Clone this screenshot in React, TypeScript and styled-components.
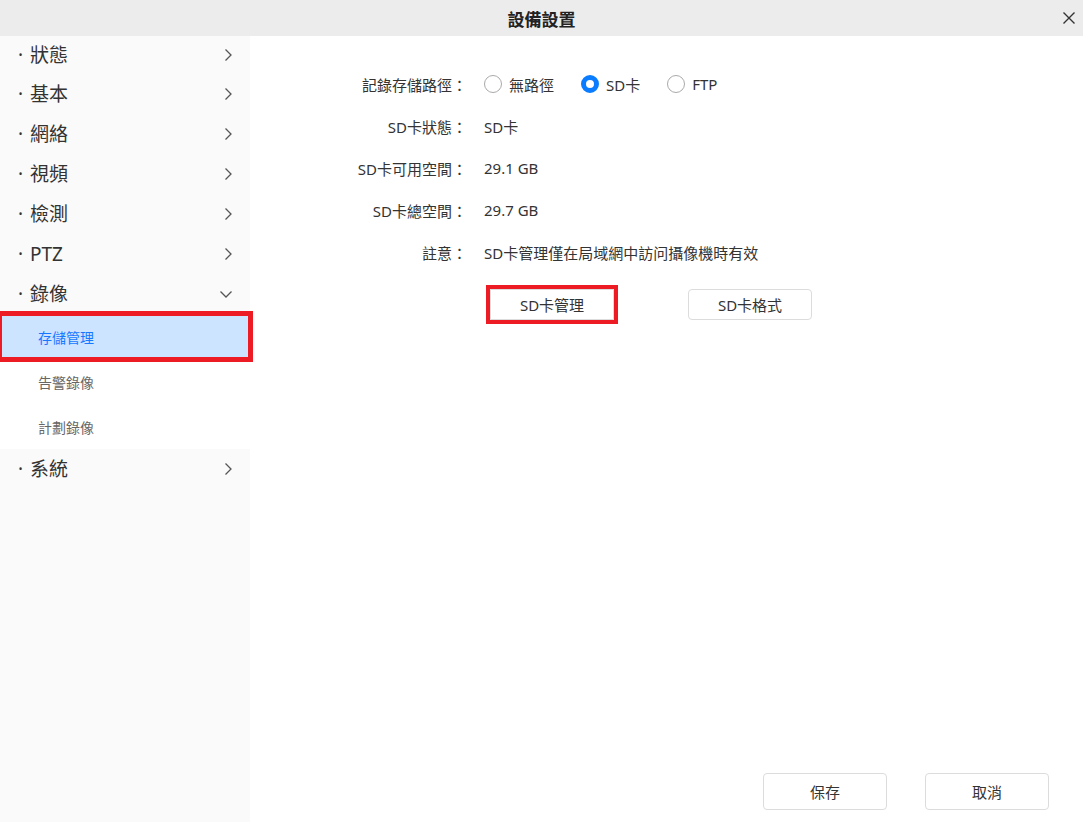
import React, { useState } from "react";
import styled, { createGlobalStyle } from "styled-components";

const GlobalStyle = createGlobalStyle`
  html, body {
    margin: 0;
    padding: 0;
    background: #ffffff;
  }
  body {
    font-family: "Noto Sans", "Noto Sans CJK TC", sans-serif;
    color: #333;
  }
  * { box-sizing: border-box; }
`;

const menu = [
  { key: "status", label: "狀態" },
  { key: "basic", label: "基本" },
  { key: "network", label: "網絡" },
  { key: "video", label: "視頻" },
  { key: "detect", label: "檢測" },
  { key: "ptz", label: "PTZ" },
  {
    key: "record",
    label: "錄像",
    children: ["存儲管理", "告警錄像", "計劃錄像"],
  },
  { key: "system", label: "系統" },
];

const RightChevron = () => (
  <svg width="10" height="14" viewBox="0 0 10 14" fill="none">
    <path d="M2.5 1.5 L8 7 L2.5 12.5" stroke="#555" strokeWidth="1.3" />
  </svg>
);

const DownChevron = () => (
  <svg width="14" height="10" viewBox="0 0 14 10" fill="none">
    <path d="M1.5 2.5 L7 8 L12.5 2.5" stroke="#555" strokeWidth="1.3" />
  </svg>
);

const CloseIcon = () => (
  <svg width="14" height="14" viewBox="0 0 14 14" fill="none">
    <path d="M1.5 1.5 L12.5 12.5 M12.5 1.5 L1.5 12.5" stroke="#333" strokeWidth="1.4" />
  </svg>
);

export default function App() {
  const [path, setPath] = useState("sd");
  const paths = [
    { key: "none", label: "無路徑" },
    { key: "sd", label: "SD卡" },
    { key: "ftp", label: "FTP" },
  ];

  return (
    <Page>
      <GlobalStyle />
      <Header>
        <Title>設備設置</Title>
        <CloseButton>
          <CloseIcon />
        </CloseButton>
      </Header>
      <Body>
        <Sidebar>
          {menu.map((item) => (
            <React.Fragment key={item.key}>
              <MenuItem>
                <MenuLabel>
                  <Dot>·</Dot>
                  {item.label}
                </MenuLabel>
                {item.children ? <DownChevron /> : <RightChevron />}
              </MenuItem>
              {item.children && (
                <SubMenu>
                  {item.children.map((c, i) => (
                    <SubItem key={c} $active={i === 0}>
                      {c}
                    </SubItem>
                  ))}
                </SubMenu>
              )}
            </React.Fragment>
          ))}
        </Sidebar>
        <Main>
          <Form>
            <Label>記錄存儲路徑：</Label>
            <Value>
              <RadioGroup>
                {paths.map((p) => (
                  <RadioOption key={p.key} onClick={() => setPath(p.key)}>
                    <RadioCircle $checked={path === p.key} />
                    {p.label}
                  </RadioOption>
                ))}
              </RadioGroup>
            </Value>
            <Label>SD卡狀態：</Label>
            <Value>SD卡</Value>
            <Label>SD卡可用空間：</Label>
            <Value>29.1 GB</Value>
            <Label>SD卡總空間：</Label>
            <Value>29.7 GB</Value>
            <Label>註意：</Label>
            <Value>SD卡管理僅在局域網中訪问攝像機時有效</Value>
          </Form>
          <ActionRow>
            <Button $marked>SD卡管理</Button>
            <Button>SD卡格式</Button>
          </ActionRow>
          <Footer>
            <Button $tall>保存</Button>
            <Button $tall>取消</Button>
          </Footer>
        </Main>
      </Body>
    </Page>
  );
}

const Page = styled.div`
  width: 100%;
  height: 100vh;
  display: flex;
  flex-direction: column;
  overflow: hidden;
`;

const Header = styled.div`
  position: relative;
  height: 36px;
  flex: 0 0 36px;
  background: #ececec;
  display: flex;
  align-items: center;
  justify-content: center;
`;

const Title = styled.div`
  font-size: 17px;
  font-weight: 700;
  color: #222;
`;

const CloseButton = styled.div`
  position: absolute;
  right: 7px;
  top: 11px;
  width: 14px;
  height: 14px;
  display: flex;
  cursor: pointer;
`;

const Body = styled.div`
  flex: 1;
  display: flex;
  min-height: 0;
`;

const Sidebar = styled.div`
  width: 250px;
  flex: 0 0 250px;
  background: #fafafa;
`;

const MenuItem = styled.div`
  height: 40px;
  display: flex;
  align-items: center;
  justify-content: space-between;
  padding: 0 17px 0 18px;
  font-size: 19px;
  color: #333;
  cursor: pointer;
  &:first-child {
    height: 38px;
  }
`;

const MenuLabel = styled.span`
  display: flex;
  align-items: center;
  line-height: 1;
`;

const Dot = styled.span`
  width: 12px;
`;

const SubMenu = styled.div`
  background: #ffffff;
`;

const SubItem = styled.div<{ $active?: boolean }>`
  height: 45px;
  display: flex;
  align-items: center;
  padding-left: 38px;
  font-size: 14px;
  color: ${(p) => (p.$active ? "#1677ff" : "#666")};
  background: ${(p) => (p.$active ? "#cce4ff" : "transparent")};
  outline: ${(p) => (p.$active ? "5px solid #ed1c24" : "none")};
  outline-offset: -2px;
  position: relative;
  cursor: pointer;
`;

const Main = styled.div`
  flex: 1;
  display: flex;
  flex-direction: column;
  padding: 27px 34px 12px 90px;
`;

const Form = styled.div`
  display: grid;
  grid-template-columns: 127px 1fr;
  column-gap: 17px;
  grid-auto-rows: 42px;
  align-items: center;
  font-size: 15px;
  color: #333;
`;

const Label = styled.div`
  text-align: right;
  white-space: nowrap;
`;

const Value = styled.div`
  white-space: nowrap;
`;

const RadioGroup = styled.div`
  display: flex;
  align-items: center;
  gap: 27px;
`;

const RadioOption = styled.label`
  display: flex;
  align-items: center;
  gap: 7px;
  cursor: pointer;
`;

const RadioCircle = styled.span<{ $checked?: boolean }>`
  width: 18px;
  height: 18px;
  border-radius: 50%;
  background: #fff;
  border: ${(p) => (p.$checked ? "5px solid #0a7cff" : "1px solid #aaa")};
`;

const ActionRow = styled.div`
  display: flex;
  gap: 74px;
  margin: 16px 0 0 150px;
`;

const Button = styled.button<{ $marked?: boolean; $tall?: boolean }>`
  width: 124px;
  height: ${(p) => (p.$tall ? "37px" : "31px")};
  background: #fff;
  border: 1px solid #dcdcdc;
  border-radius: ${(p) => (p.$marked ? "0" : "4px")};
  font-family: inherit;
  font-size: 15px;
  color: #333;
  cursor: pointer;
  outline: ${(p) => (p.$marked ? "4px solid #ed1c24" : "none")};
  outline-offset: 0;
`;

const Footer = styled.div`
  margin-top: auto;
  display: flex;
  justify-content: flex-end;
  gap: 38px;
`;
